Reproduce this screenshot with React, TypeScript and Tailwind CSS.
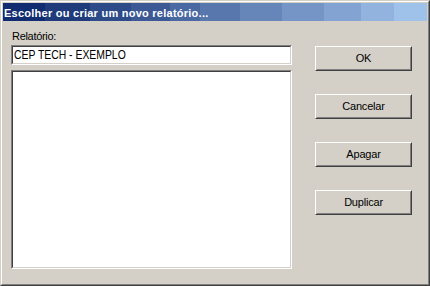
const titleBands =
  "bg-[linear-gradient(to_right,#112c70_0_42px,#1f3b7c_42px_87px,#2d4a89_87px_128px,#3c5995_128px_167px,#4a68a1_167px_197px,#5877ad_197px_237px,#6686b9_237px_279px,#7495c5_279px_321px,#83a4d2_321px_358px,#91b3de_358px_391px,#9fc2ea_391px_100%)]";

function Sunken({ className, children }: { className: string; children?: React.ReactNode }) {
  return (
    <div className={`border border-t-[#808080] border-l-[#808080] border-r-white border-b-white ${className}`}>
      <div className="h-full border border-t-[#404040] border-l-[#404040] border-r-[#d4d0c8] border-b-[#d4d0c8] bg-white">
        {children}
      </div>
    </div>
  );
}

function WinButton({ label }: { label: string }) {
  return (
    <button className="h-[25px] w-[97px] border border-t-white border-l-white border-r-[#404040] border-b-[#404040] bg-[#d4d0c8] p-0">
      <div className="flex h-full items-center justify-center border border-t-[#d4d0c8] border-l-[#d4d0c8] border-r-[#808080] border-b-[#808080] text-[11px] tracking-[-0.2px] text-black">
        {label}
      </div>
    </button>
  );
}

export default function App() {
  return (
    <div className="h-[286px] w-[430px] border border-t-[#d4d0c8] border-l-[#d4d0c8] border-r-[#404040] border-b-[#404040] font-['Liberation_Sans',Arial,sans-serif]">
      <div className="h-full border border-t-white border-l-white border-r-[#808080] border-b-[#808080] bg-[#d4d0c8] p-px">
        {/* title bar */}
        <div className={`h-[18px] overflow-hidden pl-px text-[11px] font-bold leading-[20px] tracking-[0.25px] text-white ${titleBands}`}>
          Escolher ou criar um novo relatório...
        </div>

        <div className="flex pl-[8px]">
          <div className="flex w-[281px] flex-col pt-[9px]">
            <div className="mb-[2px] pl-px text-[11px] leading-[13px] tracking-[-0.3px] text-black">Relatório:</div>
            <Sunken className="h-[20px]">
              <div className="pl-px text-[13px] leading-[16px] text-black">
                <span className="inline-block origin-left scale-x-[0.8] whitespace-nowrap">CEP TECH - EXEMPLO</span>
              </div>
            </Sunken>
            <Sunken className="mt-[5px] h-[199px]" />
          </div>

          <div className="ml-[23px] flex flex-col gap-[23px] pt-[25px]">
            <WinButton label="OK" />
            <WinButton label="Cancelar" />
            <WinButton label="Apagar" />
            <WinButton label="Duplicar" />
          </div>
        </div>
      </div>
    </div>
  );
}
